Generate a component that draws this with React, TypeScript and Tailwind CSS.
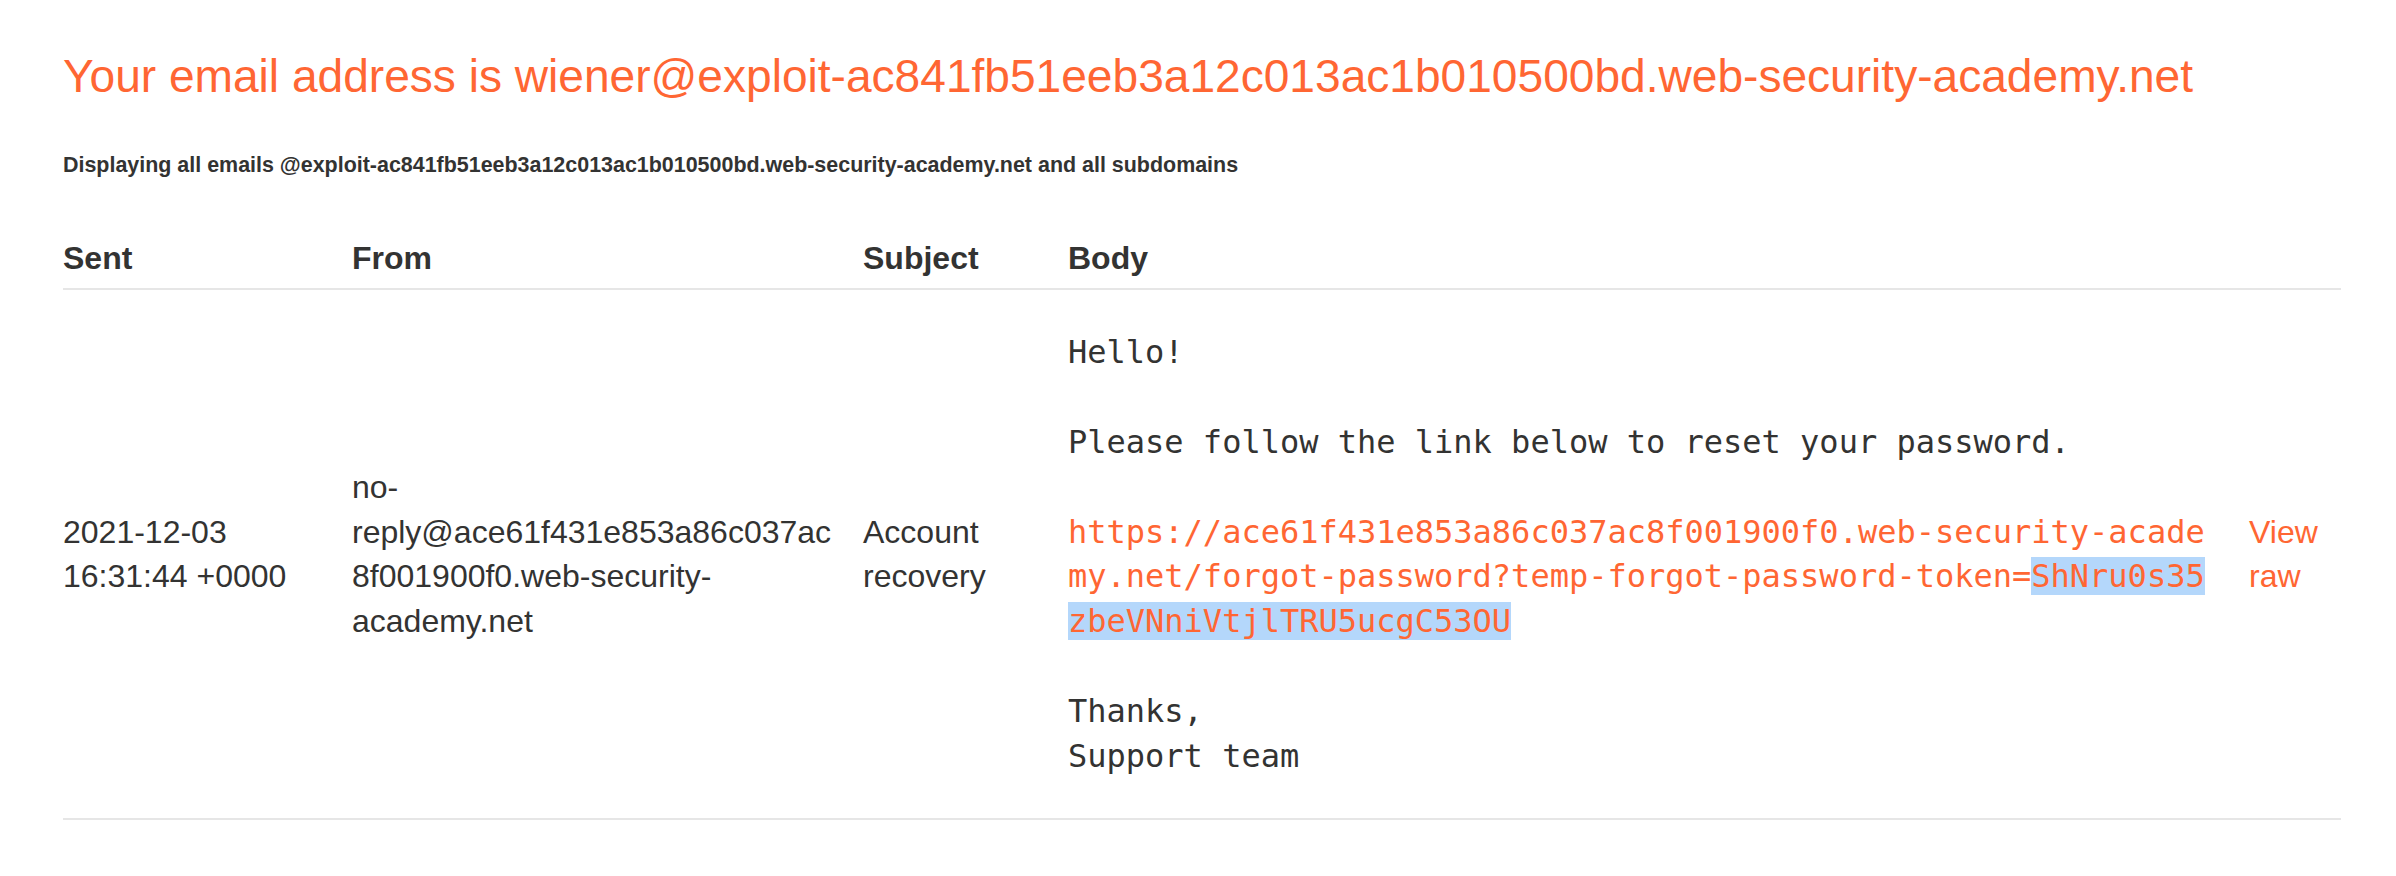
import React from 'react'

// Exploit server email client view: one received email in a table.
const sans = "font-['Liberation_Sans',Arial,sans-serif]"
const mono = "font-['DejaVu_Sans_Mono',monospace]"

const cols = 'grid grid-cols-[289px_511px_205px_1181px_1fr]'

export default function App() {
  return (
    <div className={`${sans} min-h-screen bg-white pl-[63px] pr-[55px] pt-[44px] text-[#333332]`}>
      <h4 className="text-[46.1px] leading-[1.4] text-[#ff6633]">
        Your email address is wiener@exploit-ac841fb51eeb3a12c013ac1b010500bd.web-security-academy.net
      </h4>
      <h6 className="mt-[41px] text-[21.45px] font-bold leading-[1.4]">
        Displaying all emails @exploit-ac841fb51eeb3a12c013ac1b010500bd.web-security-academy.net and all subdomains
      </h6>

      <div className="mt-[56px] text-[32px] leading-[1.4]">
        {/* header row */}
        <div className={`${cols} border-b-2 border-[#e6e6e6] pb-2 font-bold`}>
          <div>Sent</div>
          <div>From</div>
          <div>Subject</div>
          <div>Body</div>
          <div />
        </div>

        {/* the one email */}
        <div className={`${cols} items-center border-b-2 border-[#e6e6e6] py-[40px]`}>
          <div>
            2021-12-03
            <br />
            16:31:44 +0000
          </div>
          <div className="w-[490px] break-words">
            no-reply@ace61f431e853a86c037ac8f001900f0.web-security-academy.net
          </div>
          <div className="w-[180px]">Account recovery</div>
          <pre className={`${mono} w-[1145px] whitespace-pre-wrap break-all text-[32px] leading-[1.4]`}>
            {'Hello!\n\nPlease follow the link below to reset your password.\n\n'}
            <a className="text-[#ff6633]" href="#">
              https://ace61f431e853a86c037ac8f001900f0.web-security-academy.net/forgot-password?temp-forgot-password-token=
              <span className="bg-[#b4d7fb]">ShNru0s35zbeVNniVtjlTRU5ucgC53OU</span>
            </a>
            {'\n\nThanks,\nSupport team'}
          </pre>
          <div>
            <a className="text-[#ff6633]" href="#">
              View raw
            </a>
          </div>
        </div>
      </div>
    </div>
  )
}
